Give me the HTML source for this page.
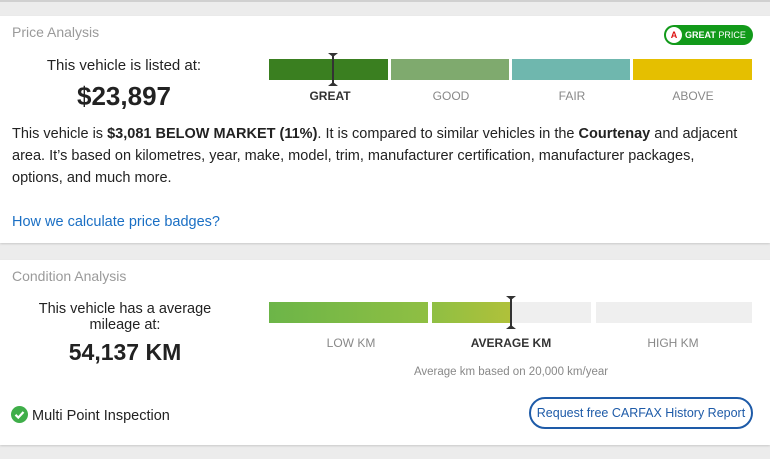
<!DOCTYPE html>
<html><head><style>
*{margin:0;padding:0;box-sizing:border-box}
body{width:770px;height:459px;background:#ececec;font-family:"Liberation Sans",sans-serif;position:relative;overflow:hidden;color:#222}
.card{position:absolute;left:0;width:770px;background:#fff;box-shadow:0 1px 2px rgba(0,0,0,.15)}
.a{position:absolute;white-space:nowrap}
.t{font-size:14px;color:#9a9a9a;left:12px}
.seg{position:absolute;height:21px}
.lbl{position:absolute;font-size:12px;color:#888;text-align:center;transform:translateX(-50%);white-space:nowrap}
</style></head><body>
<div style="position:absolute;left:0;top:0;width:770px;height:2px;background:#d0d0d0"></div>
<div class="card" style="top:16px;height:227px">
  <div class="a t" style="top:8px">Price Analysis</div>
  <div class="a" style="left:664px;top:9px;width:89px;height:20px;border-radius:10px;background:#129a1a;color:#fff;font-size:9px;line-height:20px;padding-left:21px"><b>GREAT</b> PRICE
    <div style="position:absolute;left:2px;top:2px;width:16px;height:16px;border-radius:50%;background:#fff;color:#d11;font-size:9px;font-weight:bold;line-height:16px;text-align:center">A</div></div>
  <div class="a" style="left:0;width:248px;text-align:center;top:41px;font-size:15px">This vehicle is listed at:</div>
  <div class="a" style="left:0;width:248px;text-align:center;top:65px;font-size:26px;font-weight:bold">$23,897</div>
  <div class="seg" style="left:269px;top:43px;width:119px;background:#3a7f20"></div>
  <div class="seg" style="left:391px;top:43px;width:118px;background:#7faa6e"></div>
  <div class="seg" style="left:512px;top:43px;width:118px;background:#6fb7ae"></div>
  <div class="seg" style="left:633px;top:43px;width:119px;background:#e5bf00"></div>
  <div class="a" style="left:332px;top:38px;width:2px;height:31px;background:#333"></div>
  <div class="a" style="left:328px;top:37px;width:0;height:0;border-left:5px solid transparent;border-right:5px solid transparent;border-top:4px solid #333"></div>
  <div class="a" style="left:328px;top:66px;width:0;height:0;border-left:5px solid transparent;border-right:5px solid transparent;border-bottom:4px solid #333"></div>
  <div class="lbl" style="left:330px;top:73px;color:#333;font-weight:bold">GREAT</div>
  <div class="lbl" style="left:451px;top:73px">GOOD</div>
  <div class="lbl" style="left:572px;top:73px">FAIR</div>
  <div class="lbl" style="left:693px;top:73px">ABOVE</div>
  <div class="a" style="left:12px;top:107px;width:742px;white-space:normal;font-size:14.5px;line-height:22px;color:#222">This vehicle is <b>$3,081 BELOW MARKET (11%)</b>. It is compared to similar vehicles in the <b>Courtenay</b> and adjacent area. It’s based on kilometres, year, make, model, trim, manufacturer certification, manufacturer packages,<br>options, and much more.</div>
  <div class="a" style="left:12px;top:198px;font-size:14.5px;color:#1a6fc4">How we calculate price badges?</div>
</div>
<div class="card" style="top:260px;height:185px">
  <div class="a t" style="top:8px">Condition Analysis</div>
  <div class="a" style="left:0;width:250px;text-align:center;top:41px;font-size:14.5px;line-height:16px;white-space:normal">This vehicle has a average<br>mileage at:</div>
  <div class="a" style="left:0;width:250px;text-align:center;top:79px;font-size:23px;font-weight:bold">54,137 KM</div>
  <div class="seg" style="left:269px;top:42px;width:159px;background:linear-gradient(90deg,#6cb548,#8fbf43)"></div>
  <div class="seg" style="left:432px;top:42px;width:79px;background:linear-gradient(90deg,#8fbf43,#b0c13a)"></div>
  <div class="seg" style="left:511px;top:42px;width:80px;background:#efefef"></div>
  <div class="seg" style="left:596px;top:42px;width:156px;background:#efefef"></div>
  <div class="a" style="left:510px;top:37px;width:2px;height:31px;background:#333"></div>
  <div class="a" style="left:506px;top:36px;width:0;height:0;border-left:5px solid transparent;border-right:5px solid transparent;border-top:4px solid #333"></div>
  <div class="a" style="left:506px;top:65px;width:0;height:0;border-left:5px solid transparent;border-right:5px solid transparent;border-bottom:4px solid #333"></div>
  <div class="lbl" style="left:351px;top:76px">LOW KM</div>
  <div class="lbl" style="left:511px;top:76px;color:#333;font-weight:bold">AVERAGE KM</div>
  <div class="lbl" style="left:673px;top:76px">HIGH KM</div>
  <div class="lbl" style="left:511px;top:106px;font-size:11.5px">Average km based on 20,000 km/year</div>
  <div class="a" style="left:11px;top:146px;width:17px;height:17px;border-radius:50%;background:#3fae49"></div>
  <svg class="a" style="left:11px;top:146px" width="17" height="17"><path d="M4.5 8.8l2.8 2.8 5.2-5.6" stroke="#fff" stroke-width="2.2" fill="none"/></svg>
  <div class="a" style="left:32px;top:148px;font-size:14.5px">Multi Point Inspection</div>
  <div class="a" style="left:529px;top:137px;width:224px;height:32px;border:2px solid #1e5ba8;border-radius:16px;text-align:center;line-height:28px;font-size:12.5px;color:#1e5ba8">Request free CARFAX History Report</div>
</div>
</body></html>
